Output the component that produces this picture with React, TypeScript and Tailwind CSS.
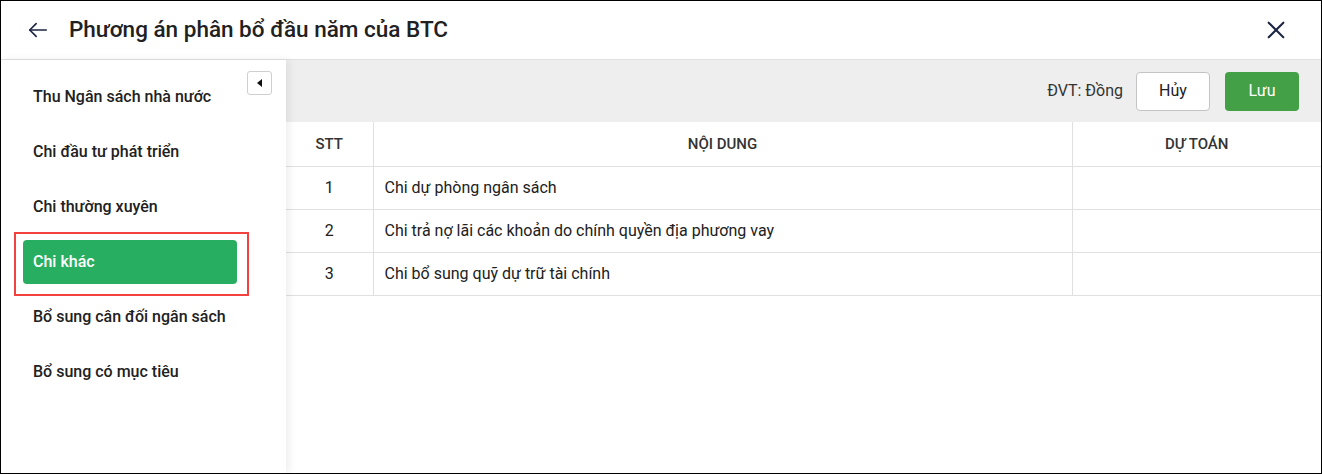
import React from 'react';

const menuItems = [
  'Thu Ngân sách nhà nước',
  'Chi đầu tư phát triển',
  'Chi thường xuyên',
  'Chi khác',
  'Bổ sung cân đối ngân sách',
  'Bổ sung có mục tiêu',
];

const rows = [
  { stt: 1, content: 'Chi dự phòng ngân sách' },
  { stt: 2, content: 'Chi trả nợ lãi các khoản do chính quyền địa phương vay' },
  { stt: 3, content: 'Chi bổ sung quỹ dự trữ tài chính' },
];

export default function App() {
  const active = 'Chi khác';

  return (
    <div
      className="w-[1322px] h-[474px] border border-black bg-white flex flex-col overflow-hidden text-[#212121]"
      style={{ fontFamily: 'Roboto, "Noto Sans", sans-serif' }}
    >
      {/* Header */}
      <header className="h-[59px] shrink-0 flex items-center border-b border-[#e0e0e0] pl-[26px] pr-[34px]">
        <svg width="22" height="22" viewBox="0 0 24 24" fill="none" stroke="#1c2541" strokeWidth="1.8" strokeLinecap="round" strokeLinejoin="round">
          <path d="M21 12H3" />
          <path d="M10 5l-7 7 7 7" />
        </svg>
        <h1 className="ml-[20px] text-[22.5px] font-medium text-[#212121]">Phương án phân bổ đầu năm của BTC</h1>
        <button className="ml-auto" aria-label="Đóng">
          <svg width="22" height="22" viewBox="0 0 24 24" fill="none" stroke="#1c2541" strokeWidth="2.2" strokeLinecap="round">
            <path d="M4 4l16 16" />
            <path d="M20 4L4 20" />
          </svg>
        </button>
      </header>

      <div className="flex flex-1 min-h-0">
        {/* Sidebar */}
        <aside className="relative z-10 w-[285px] shrink-0 bg-white shadow-[3px_0_8px_rgba(0,0,0,0.07)] pt-[15px] px-[22px]">
          <button className="absolute top-[11px] right-[14px] w-[25px] h-[24px] flex items-center justify-center border border-[#cfcfcf] rounded-[3px] bg-white">
            <span className="block w-0 h-0 border-y-[4px] border-y-transparent border-r-[5px] border-r-[#111]" />
          </button>
          <nav className="flex flex-col gap-[11px] w-[214px]">
            {menuItems.map((item) => {
              const isActive = item === active;
              return (
                <div key={item} className="relative">
                  <div
                    className={
                      isActive
                        ? 'h-[44px] flex items-center px-[10px] rounded-[4px] bg-[#27ae60] text-white text-[16px] font-medium whitespace-nowrap'
                        : 'h-[44px] flex items-center px-[10px] text-[16px] font-medium text-[#212121] whitespace-nowrap'
                    }
                  >
                    {item}
                  </div>
                  {isActive && (
                    <div className="absolute -left-[9px] -top-[8px] -right-[12px] -bottom-[12px] border-2 border-[#f2413f] pointer-events-none" />
                  )}
                </div>
              );
            })}
          </nav>
        </aside>

        {/* Main */}
        <main className="flex-1 flex flex-col min-w-0">
          <div className="h-[62px] shrink-0 bg-[#eeeeee] flex items-center justify-end gap-[13px] pr-[22px]">
            <span className="text-[16px] text-[#333]">ĐVT: Đồng</span>
            <button className="w-[74px] h-[39px] rounded-[4px] border border-[#c4c4c4] bg-white text-[16px] text-[#212121]">
              Hủy
            </button>
            <button className="ml-[2px] w-[74px] h-[39px] rounded-[4px] bg-[#43a047] text-[16px] text-white">
              Lưu
            </button>
          </div>

          <table className="w-full border-collapse table-fixed">
            <colgroup>
              <col className="w-[87px]" />
              <col className="w-[699px]" />
              <col />
            </colgroup>
            <thead>
              <tr className="h-[44px] border-b border-[#e0e0e0]">
                <th className="text-[15px] font-medium text-[#333] border-r border-[#e0e0e0]">STT</th>
                <th className="text-[15px] font-medium text-[#333] border-r border-[#e0e0e0]">NỘI DUNG</th>
                <th className="text-[15px] font-medium text-[#333]">DỰ TOÁN</th>
              </tr>
            </thead>
            <tbody>
              {rows.map((r) => (
                <tr key={r.stt} className="h-[43px] border-b border-[#e0e0e0]">
                  <td className="text-center text-[16px] border-r border-[#e0e0e0]">{r.stt}</td>
                  <td className="px-[11px] text-[16px] border-r border-[#e0e0e0]">{r.content}</td>
                  <td />
                </tr>
              ))}
            </tbody>
          </table>
        </main>
      </div>
    </div>
  );
}
